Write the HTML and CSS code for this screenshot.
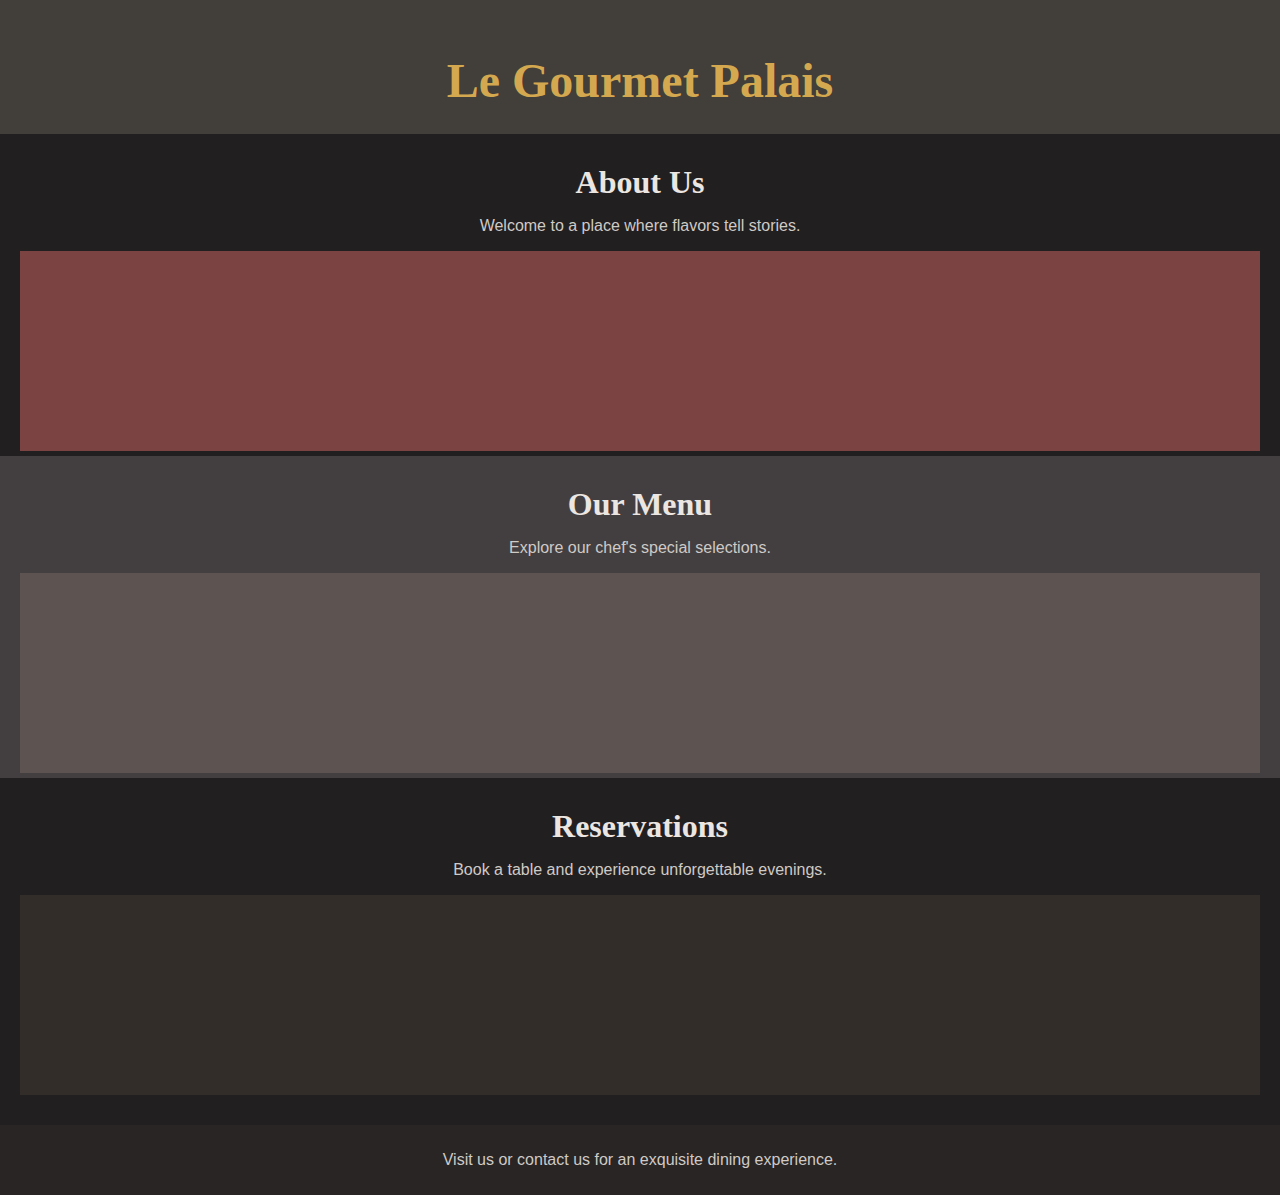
FILE: index.html
```html
<!DOCTYPE html>
<html lang="en">
<head>
<meta charset="utf-8">
<title>Le Gourmet Palais</title>
<link rel="stylesheet" href="styles.css">
</head>
<body>
<header class="site-header">
  <h1 class="site-title">Le Gourmet Palais</h1>
</header>
<main class="main">
  <section class="section section-dark">
    <h2 class="section-title">About Us</h2>
    <p class="section-text">Welcome to a place where flavors tell stories.</p>
    <div class="panel panel-wine"></div>
  </section>
  <section class="section section-mid">
    <h2 class="section-title">Our Menu</h2>
    <p class="section-text">Explore our chef's special selections.</p>
    <div class="panel panel-stone"></div>
  </section>
  <section class="section section-dark">
    <h2 class="section-title">Reservations</h2>
    <p class="section-text">Book a table and experience unforgettable evenings.</p>
    <div class="panel panel-umber"></div>
  </section>
</main>
<footer class="site-footer">
  <p class="footer-text">Visit us or contact us for an exquisite dining experience.</p>
</footer>
</body>
</html>
```
FILE: styles.css
```css
* { box-sizing: border-box; }
html, body { margin: 0; padding: 0; }
body {
  background: #221f20;
  font-family: "Liberation Sans", Arial, sans-serif;
  color: #cfcac6;
}
.site-header {
  background: #423e3a;
  height: 134px;
  display: flex;
  align-items: center;
  justify-content: center;
  padding-top: 26px;
}
.site-title {
  margin: 0;
  font-family: "Liberation Serif", "Times New Roman", serif;
  font-weight: bold;
  font-size: 48px;
  color: #d4a84f;
  line-height: 55px;
}
.main {
  padding-bottom: 25px;
}
.section {
  padding: 30px 20px 5px;
  text-align: center;
}
.section-dark { background: #221f20; }
.section-mid { background: #433f40; }
.section-title {
  margin: 0 0 16px;
  font-family: "Liberation Serif", "Times New Roman", serif;
  font-weight: bold;
  font-size: 32px;
  line-height: 37px;
  color: #ece6e2;
}
.section-text {
  margin: 0 0 16px;
  font-size: 16px;
  line-height: 18px;
  color: #cfcac6;
}
.panel { height: 200px; }
.panel-wine { background: #7b4442; }
.panel-stone { background: #5d5452; }
.panel-umber { background: #332d2a; }
.site-footer {
  background: #282524;
  height: 70px;
  display: flex;
  align-items: center;
  justify-content: center;
}
.footer-text {
  margin: 0;
  font-size: 16px;
  line-height: 18px;
  color: #cfcac6;
}
```
